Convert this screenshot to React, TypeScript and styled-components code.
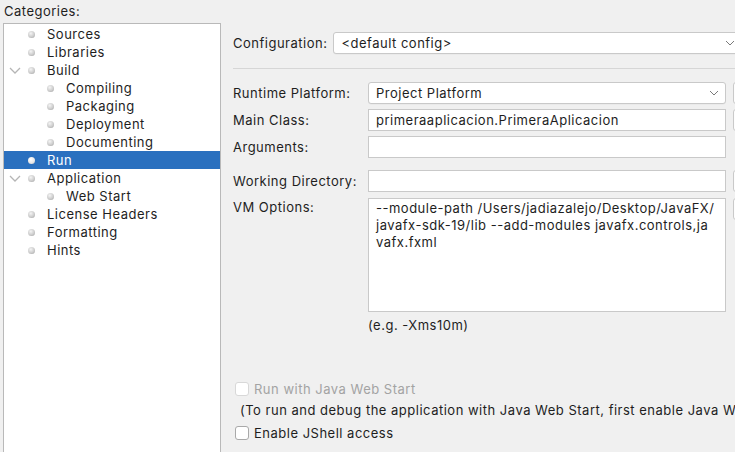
import React from 'react';
import styled, { createGlobalStyle } from 'styled-components';

const GlobalStyle = createGlobalStyle`
  html, body {
    margin: 0;
    padding: 0;
    background: #f0f0f0;
    overflow: hidden;
  }
  body {
    font-family: Inter, "Liberation Sans", sans-serif;
    font-size: 13px;
    letter-spacing: 0.5px;
    color: #1e1e1e;
  }
`;

const Window = styled.div`
  display: flex;
  width: 735px;
  height: 452px;
  overflow: hidden;
`;

const Sidebar = styled.div`
  display: flex;
  flex-direction: column;
  width: 221px;
  flex-shrink: 0;
`;

const SidebarTitle = styled.div`
  height: 23px;
  line-height: 22px;
  padding-left: 4px;
`;

const Tree = styled.div`
  flex: 1;
  margin-left: 3px;
  padding-top: 1px;
  background: #fff;
  border: 1px solid #b9b9b9;
  border-bottom: none;
`;

const TreeRow = styled.div<{ $level: number; $selected?: boolean }>`
  position: relative;
  display: flex;
  align-items: center;
  height: 18px;
  padding-left: ${(p) => (p.$level === 1 ? 24 : 43)}px;
  background: ${(p) => (p.$selected ? '#2a70bf' : 'transparent')};
  color: ${(p) => (p.$selected ? '#fff' : '#1e1e1e')};
`;

const Bullet = styled.span<{ $selected?: boolean }>`
  width: 7px;
  height: 7px;
  border-radius: 50%;
  margin-right: 12px;
  background: ${(p) =>
    p.$selected
      ? 'radial-gradient(circle at 40% 35%, #fff 0%, #e6e6e6 60%, #bdbdbd 100%)'
      : 'radial-gradient(circle at 40% 35%, #f4f4f4 0%, #c9c9c9 60%, #8f8f8f 100%)'};
`;

const Expander = styled.svg`
  position: absolute;
  left: 5px;
  top: 6px;
`;

const Content = styled.div`
  flex: 1;
  padding: 32px 0 0 12px;
  min-width: 0;
`;

const ConfigRow = styled.div`
  display: flex;
  align-items: center;
  gap: 6px;
  width: 530px;
`;

const Separator = styled.div`
  height: 1px;
  background: #d6d6d6;
  margin: 14px 0 13px;
  width: 530px;
`;

const FormRow = styled.div<{ $top?: number; $align?: string }>`
  display: grid;
  grid-template-columns: 128px 358px 22px;
  column-gap: 7px;
  align-items: ${(p) => p.$align || 'center'};
  margin-top: ${(p) => p.$top ?? 5}px;
`;

const Label = styled.div<{ $pad?: number }>`
  white-space: nowrap;
  padding-top: ${(p) => p.$pad ?? 0}px;
`;

const Field = styled.div`
  box-sizing: border-box;
  height: 22px;
  background: #fff;
  border: 1px solid #c9c9c9;
  padding: 0 7px;
  line-height: 20px;
  white-space: nowrap;
  overflow: hidden;
`;

const TextArea = styled.div`
  box-sizing: border-box;
  height: 114px;
  background: #fff;
  border: 1px solid #c9c9c9;
  padding: 1px 7px 0;
  line-height: 17px;
  white-space: pre-line;
  overflow: hidden;
`;

const Combo = styled.div<{ $width?: number }>`
  box-sizing: border-box;
  display: flex;
  align-items: center;
  justify-content: space-between;
  height: 22px;
  ${(p) => (p.$width ? `width: ${p.$width}px;` : '')}
  flex-shrink: 0;
  background: #fff;
  border: 1px solid #c9c9c9;
  border-radius: 3px;
  padding: 0 6px 0 7px;
  white-space: nowrap;
  box-shadow: 0 0.5px 0 rgba(0, 0, 0, 0.05);
`;

const ChevronSlot = styled.span<{ $right?: number }>`
  display: flex;
  margin-right: ${(p) => p.$right ?? 0}px;
`;

const SideButton = styled.div`
  box-sizing: border-box;
  height: 22px;
  border: 1px solid #c9c9c9;
  border-radius: 3px;
  background: #fdfdfd;
`;

const Hint = styled.div`
  margin: 4px 0 0 135px;
  height: 18px;
  line-height: 18px;
`;

const CheckRow = styled.label<{ $disabled?: boolean; $top: number }>`
  display: flex;
  align-items: center;
  gap: 5px;
  margin-top: ${(p) => p.$top}px;
  margin-left: 2px;
  height: 18px;
  color: ${(p) => (p.$disabled ? '#a3a3a3' : '#1e1e1e')};
  white-space: nowrap;
`;

const Box = styled.span<{ $disabled?: boolean }>`
  box-sizing: border-box;
  width: 14px;
  height: 14px;
  border-radius: 3px;
  background: #fff;
  border: 1px solid ${(p) => (p.$disabled ? '#d8d8d8' : '#a9a9a9')};
`;

const Note = styled.div`
  margin: 3px 0 0 7px;
  height: 18px;
  line-height: 18px;
  white-space: nowrap;
`;

const Chevron = () => (
  <svg width="10" height="6" viewBox="0 0 10 6">
    <path d="M1 1 L5 5 L9 1" fill="none" stroke="#7a7a7a" strokeWidth="1" />
  </svg>
);

type Node = { label: string; level: number; expanded?: boolean; selected?: boolean };

const nodes: Node[] = [
  { label: 'Sources', level: 1 },
  { label: 'Libraries', level: 1 },
  { label: 'Build', level: 1, expanded: true },
  { label: 'Compiling', level: 2 },
  { label: 'Packaging', level: 2 },
  { label: 'Deployment', level: 2 },
  { label: 'Documenting', level: 2 },
  { label: 'Run', level: 1, selected: true },
  { label: 'Application', level: 1, expanded: true },
  { label: 'Web Start', level: 2 },
  { label: 'License Headers', level: 1 },
  { label: 'Formatting', level: 1 },
  { label: 'Hints', level: 1 },
];

const vmOptions = [
  '--module-path /Users/jadiazalejo/Desktop/JavaFX/',
  'javafx-sdk-19/lib --add-modules javafx.controls,ja',
  'vafx.fxml',
].join('\n');

const App = (): JSX.Element => (
  <>
    <GlobalStyle />
    <Window>
      <Sidebar>
        <SidebarTitle>Categories:</SidebarTitle>
        <Tree>
          {nodes.map((n) => (
            <TreeRow key={n.label} $level={n.level} $selected={n.selected}>
              {n.expanded && (
                <Expander width="12" height="7" viewBox="0 0 12 7">
                  <path d="M1 1 L6 6 L11 1" fill="none" stroke="#b5b5b5" strokeWidth="1.3" />
                </Expander>
              )}
              <Bullet $selected={n.selected} />
              {n.label}
            </TreeRow>
          ))}
        </Tree>
      </Sidebar>

      <Content>
        <ConfigRow>
          <span>Configuration:</span>
          <Combo $width={430}>
            <span>&lt;default config&gt;</span>
            <ChevronSlot $right={21}>
              <Chevron />
            </ChevronSlot>
          </Combo>
        </ConfigRow>
        <Separator />

        <FormRow $top={0}>
          <Label>Runtime Platform:</Label>
          <Combo>
            <span>Project Platform</span>
            <ChevronSlot>
              <Chevron />
            </ChevronSlot>
          </Combo>
          <SideButton />
        </FormRow>
        <FormRow>
          <Label>Main Class:</Label>
          <Field>primeraaplicacion.PrimeraAplicacion</Field>
          <SideButton />
        </FormRow>
        <FormRow>
          <Label>Arguments:</Label>
          <Field />
        </FormRow>
        <FormRow $top={12}>
          <Label>Working Directory:</Label>
          <Field />
          <SideButton />
        </FormRow>
        <FormRow $top={6} $align="start">
          <Label $pad={1}>VM Options:</Label>
          <TextArea>{vmOptions}</TextArea>
          <SideButton />
        </FormRow>
        <Hint>(e.g. -Xms10m)</Hint>

        <CheckRow $disabled $top={46}>
          <Box $disabled />
          Run with Java Web Start
        </CheckRow>
        <Note>(To run and debug the application with Java Web Start, first enable Java Web Start)</Note>
        <CheckRow $top={5}>
          <Box />
          Enable JShell access
        </CheckRow>
      </Content>
    </Window>
  </>
);

export default App;
